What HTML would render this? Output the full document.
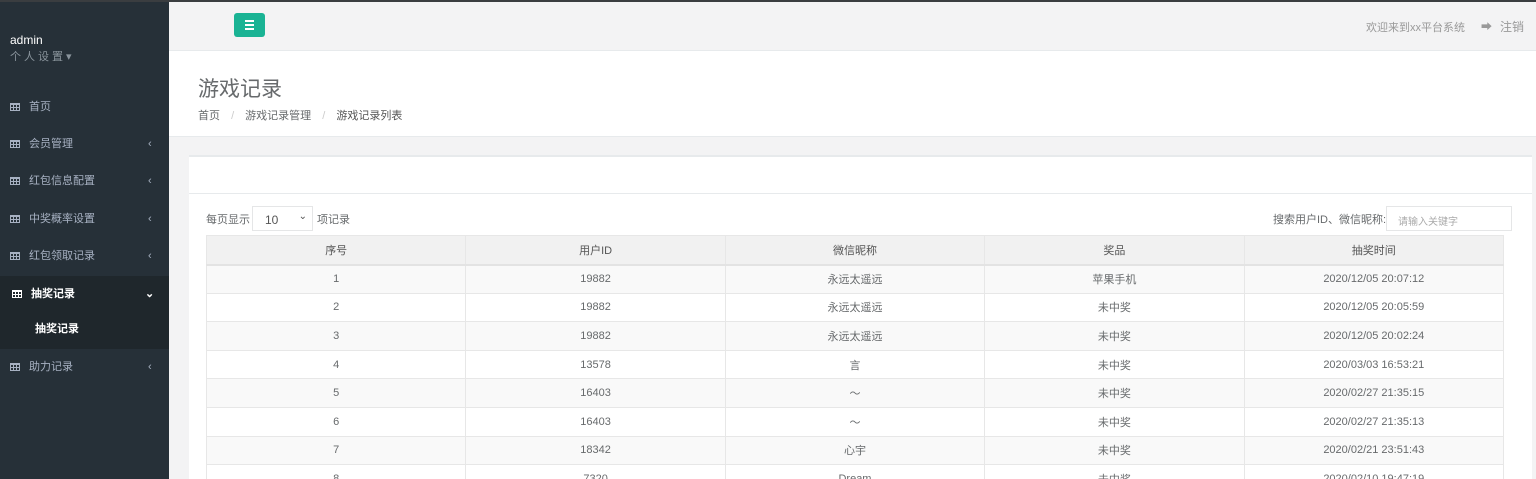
<!DOCTYPE html>
<html><head><meta charset="utf-8"><style>
*{box-sizing:border-box;margin:0;padding:0}
html{overflow:hidden}
body{width:1536px;height:479px;overflow:hidden;background:#f3f3f4;font-family:"Liberation Sans","Noto Sans CJK SC",sans-serif;font-size:11px;color:#676a6c;position:relative}
.topline{position:absolute;left:0;top:0;width:1536px;height:2px;background:#3a3d40}
.side{position:absolute;left:0;top:2px;width:169px;height:477px;background:#263038}
.side .u{position:absolute;left:10px;top:31px;color:#fff;font-size:12px}
.side .s{position:absolute;left:10px;top:46px;color:#8a949c;font-size:11px;letter-spacing:3px}
.mi{position:absolute;left:0;width:169px;height:37px;color:#a7b1c2;font-size:11px;line-height:37px;padding-left:29px}
.mi .ic{position:absolute;left:10px;top:14px;width:10px;height:8px;border:1px solid #a7b1c2;background:repeating-linear-gradient(90deg,transparent 0 2px,#a7b1c2 2px 3px),repeating-linear-gradient(0deg,transparent 0 2px,#a7b1c2 2px 3px)}
.mi .ar{position:absolute;left:148px;top:0;font-size:11px}
.act{background:#1f272c}
.nav{position:absolute;left:169px;top:2px;width:1367px;height:49px;background:#f3f3f4;border-bottom:1px solid #e7eaec}
.btn{position:absolute;left:234px;top:13px;width:31px;height:24px;background:#1ab394;border-radius:3px}
.btn i{position:absolute;left:11px;width:9px;height:2px;background:#fff}
.hdr{position:absolute;left:169px;top:51px;width:1367px;height:86px;background:#fff;border-bottom:1px solid #e7eaec}
.card{position:absolute;left:189px;top:155px;width:1343px;height:324px;background:#fff;border-top:2px solid #e7eaec}
.cardh{position:absolute;left:189px;top:193px;width:1343px;height:1px;background:#e7eaec}
.tw{position:absolute;left:206px;top:235px;width:1298px;height:244px;overflow:hidden}
table{width:1298px;border-collapse:collapse;table-layout:fixed}
td,th{border:1px solid #e7e7e7;text-align:center;height:28.6px;font-weight:normal;color:#676a6c;font-size:11px}
th{background:#f1f1f1;color:#555;border-bottom:2px solid #e3e3e3;height:29px}
tr:nth-child(even) td{background:#f9f9f9}
</style></head><body>
<div class="topline"></div>
<div class="side">
<div class="u">admin</div><div class="s">个人设置▾</div>
</div>
<div class="mi" style="top:89px"><span class="ic"></span>首页</div>
<div class="mi" style="top:126px"><span class="ic"></span>会员管理<span class="ar">‹</span></div>
<div class="mi" style="top:163px"><span class="ic"></span>红包信息配置<span class="ar">‹</span></div>
<div class="mi" style="top:201px"><span class="ic"></span>中奖概率设置<span class="ar">‹</span></div>
<div class="mi" style="top:238px"><span class="ic"></span>红包领取记录<span class="ar">‹</span></div>
<div class="act" style="position:absolute;left:0;top:276px;width:169px;height:73px"></div>
<div class="mi" style="top:276px;color:#fff;font-weight:bold;padding-left:31px"><span class="ic" style="left:12px;border-color:#fff;background:repeating-linear-gradient(90deg,transparent 0 2px,#fff 2px 3px),repeating-linear-gradient(0deg,transparent 0 2px,#fff 2px 3px)"></span>抽奖记录<span class="ar" style="left:145px">⌄</span></div>
<div style="position:absolute;left:35px;top:320px;color:#fff;font-weight:bold;font-size:11px">抽奖记录</div>
<div class="mi" style="top:349px"><span class="ic"></span>助力记录<span class="ar">‹</span></div>
<div class="nav"></div>
<div class="btn"><i style="top:7px"></i><i style="top:11px"></i><i style="top:15px"></i></div>
<div style="position:absolute;left:1366px;top:19px;color:#999">欢迎来到xx平台系统</div>
<div style="position:absolute;left:1481px;top:18px;color:#999">➡</div>
<div style="position:absolute;left:1500px;top:18px;color:#999;font-size:12px">注销</div>
<div class="hdr"></div>
<div style="position:absolute;left:198px;top:73px;font-size:21px;color:#676a6c">游戏记录</div>
<div style="position:absolute;left:198px;top:107px;color:#676a6c">首页 <span style="color:#ccc;margin:0 8px">/</span> 游戏记录管理 <span style="color:#ccc;margin:0 8px">/</span> <span style="color:#555">游戏记录列表</span></div>
<div class="card"></div><div class="cardh"></div>
<div style="position:absolute;left:206px;top:211px">每页显示</div>
<div style="position:absolute;left:252px;top:206px;width:61px;height:25px;border:1px solid #e5e6e7;padding:6px 12px;font-size:12px;color:#555">10<span style="position:absolute;right:5px;top:4px;font-size:10px">⌄</span></div>
<div style="position:absolute;left:317px;top:211px">项记录</div>
<div style="position:absolute;left:1273px;top:211px">搜索用户ID、微信昵称:</div>
<div style="position:absolute;left:1386px;top:206px;width:126px;height:25px;border:1px solid #e5e6e7;padding:6px 11px;color:#aaa;font-size:10px">请输入关键字</div>
<div class="tw"><table>
<tr><th>序号</th><th>用户ID</th><th>微信昵称</th><th>奖品</th><th>抽奖时间</th></tr>
<tr><td>1</td><td>19882</td><td>永远太遥远</td><td>苹果手机</td><td>2020/12/05 20:07:12</td></tr>
<tr><td>2</td><td>19882</td><td>永远太遥远</td><td>未中奖</td><td>2020/12/05 20:05:59</td></tr>
<tr><td>3</td><td>19882</td><td>永远太遥远</td><td>未中奖</td><td>2020/12/05 20:02:24</td></tr>
<tr><td>4</td><td>13578</td><td>言</td><td>未中奖</td><td>2020/03/03 16:53:21</td></tr>
<tr><td>5</td><td>16403</td><td>～</td><td>未中奖</td><td>2020/02/27 21:35:15</td></tr>
<tr><td>6</td><td>16403</td><td>～</td><td>未中奖</td><td>2020/02/27 21:35:13</td></tr>
<tr><td>7</td><td>18342</td><td>心宇</td><td>未中奖</td><td>2020/02/21 23:51:43</td></tr>
<tr><td>8</td><td>7320</td><td>Dream</td><td>未中奖</td><td>2020/02/10 19:47:19</td></tr>
</table></div>
</body></html>
